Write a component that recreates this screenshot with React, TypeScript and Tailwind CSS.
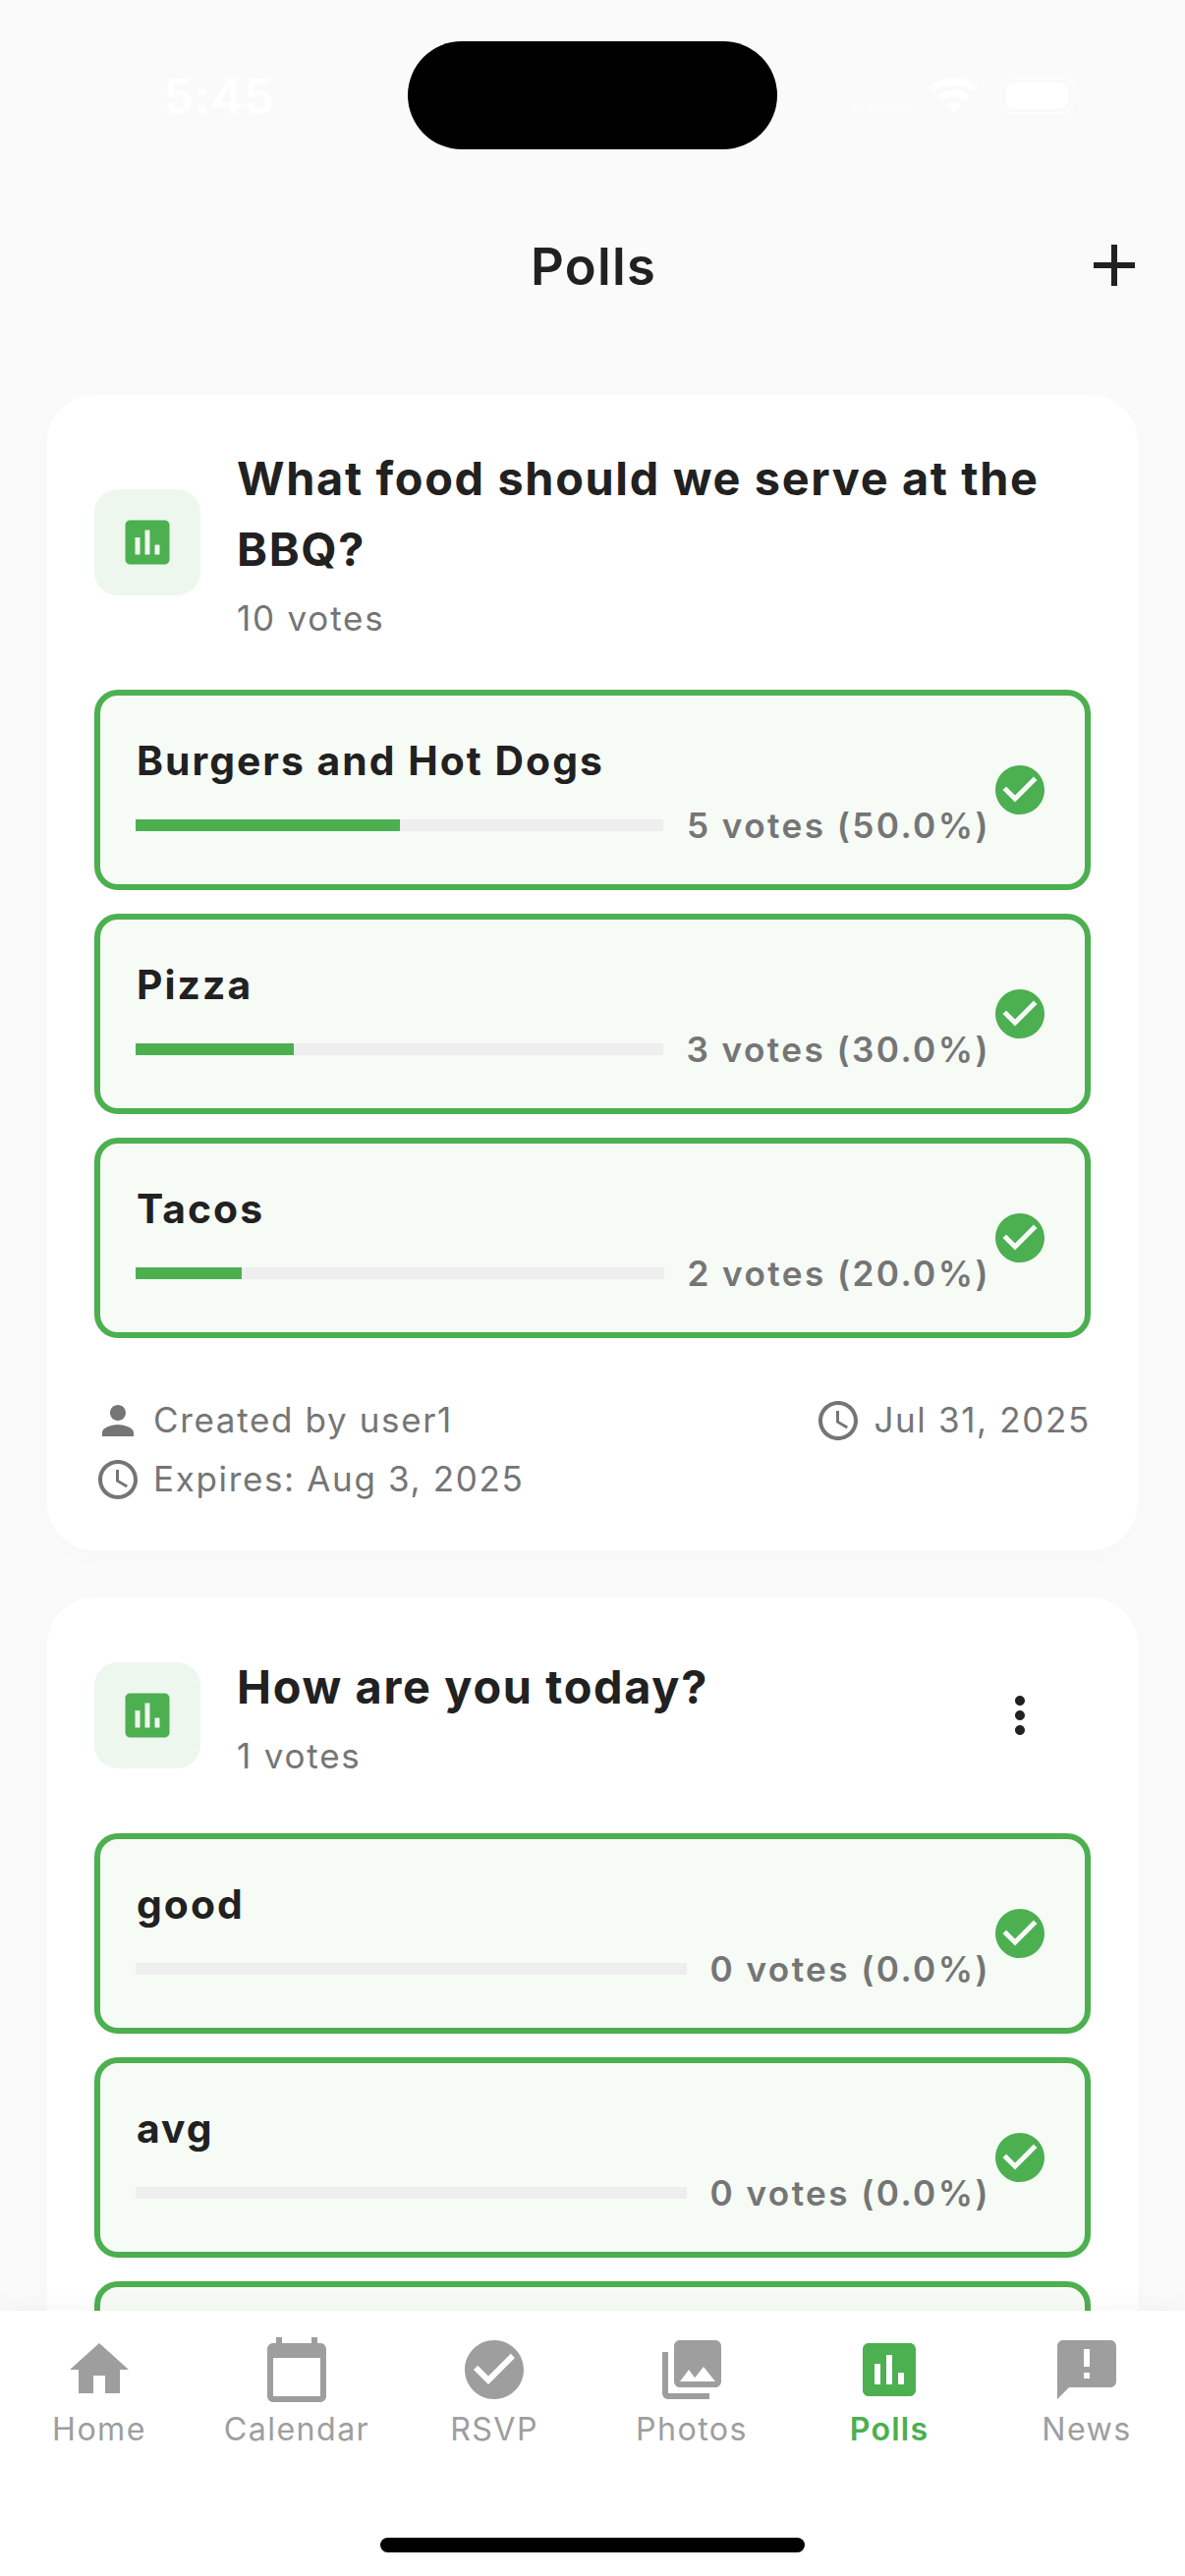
import type { ReactNode } from "react";
import type { IconType } from "react-icons";
import {
  MdAccessTime,
  MdAdd,
  MdAnnouncement,
  MdCalendarToday,
  MdCheckCircle,
  MdCollections,
  MdHome,
  MdMoreVert,
  MdPerson,
  MdPoll,
} from "react-icons/md";

type Option = { name: string; votes: number; percent: number };

type Poll = {
  title: string;
  votes: number;
  options: Option[];
  menu?: boolean;
  more?: boolean;
  footer?: { author: string; created: string; expires: string };
};

const polls: Poll[] = [
  {
    title: "What food should we serve at the BBQ?",
    votes: 10,
    options: [
      { name: "Burgers and Hot Dogs", votes: 5, percent: 50 },
      { name: "Pizza", votes: 3, percent: 30 },
      { name: "Tacos", votes: 2, percent: 20 },
    ],
    footer: { author: "user1", created: "Jul 31, 2025", expires: "Aug 3, 2025" },
  },
  {
    title: "How are you today?",
    votes: 1,
    menu: true,
    more: true,
    options: [
      { name: "good", votes: 0, percent: 0 },
      { name: "avg", votes: 0, percent: 0 },
    ],
  },
];

const tabs: { label: string; icon: IconType; active?: boolean }[] = [
  { label: "Home", icon: MdHome },
  { label: "Calendar", icon: MdCalendarToday },
  { label: "RSVP", icon: MdCheckCircle },
  { label: "Photos", icon: MdCollections },
  { label: "Polls", icon: MdPoll, active: true },
  { label: "News", icon: MdAnnouncement },
];

function StatusBar() {
  return (
    <div className="flex h-[186px] shrink-0 items-start">
      <div className="flex w-[415px] justify-center pt-[68px] pl-[31px] text-[49.5px] leading-[60px] font-semibold tracking-[0.7px] text-white">
        5:45
      </div>
      <div className="mt-[42px] h-[110px] w-[376px] rounded-full bg-black" />
      <div className="flex flex-1 items-center pt-[78px] pl-[74px] text-white">
        <div className="flex w-[58px] justify-between self-end pb-[2px]">
          {[0, 1, 2, 3].map((i) => (
            <span key={i} className="size-[10px] rounded-[3px] bg-[#fbfbfb]" />
          ))}
        </div>
        <svg viewBox="0 0 51 37" className="ml-[22px] h-[37px] w-[51px]" fill="currentColor">
          <path d="M25.5 0C35 0 44 3.700 50.500 10.200L46 14.800C40.600 9.600 33.300 8 25.500 8S10.400 9.600 5 14.800L.5 10.200C7 3.700 16 0 25.500 0Z" />
          <path d="M25.500 12.500c6.200 0 12 2.400 16.400 6.500L37.300 24.700c-3.200-3-7.300-4.600-11.800-4.600s-8.600 1.600-11.800 4.600L9.100 19c4.400-4.100 10.200-6.500 16.400-6.500Z" />
          <path d="M25.500 25c2.900 0 5.600 1.100 7.600 3L25.500 36.500 17.900 28c2-1.900 4.700-3 7.600-3Z" />
        </svg>
        <svg viewBox="0 0 80 39" className="ml-[22px] h-[39px] w-[80px]" fill="none">
          <rect x="1.500" y="1.500" width="72" height="36" rx="11" stroke="#fcfcfc" strokeWidth="3" />
          <rect x="6" y="6" width="63" height="27" rx="7.500" fill="#fff" />
          <path d="M76.500 14c2 .8 3.500 3 3.500 5.500S78.500 24.200 76.500 25Z" fill="#fcfcfc" />
        </svg>
      </div>
    </div>
  );
}

function AppBar() {
  return (
    <header className="grid h-[168px] shrink-0 grid-cols-[1fr_auto_1fr] items-center text-[#212121]">
      <span />
      <h1 className="pt-[2px] pl-[2px] text-[52.5px] leading-[66px] font-semibold tracking-[1.270px]">Polls</h1>
      <button className="mr-[36px] justify-self-end">
        <MdAdd className="size-[72px]" />
      </button>
    </header>
  );
}

function OptionFrame({ children }: { children?: ReactNode }) {
  return (
    <div className="flex h-[204px] items-center rounded-[24px] border-[6px] border-[#4caf50] bg-[#f6fbf6] px-[36px]">
      {children}
    </div>
  );
}

function OptionRow({ name, votes, percent }: Option) {
  return (
    <OptionFrame>
      <div className="flex flex-1 flex-col gap-3">
        <div className="pl-px text-[40.8px] leading-[60px] font-[650] tracking-[2.050px] text-[#212121]">{name}</div>
        <div className="flex h-12 items-center gap-6">
          <div className="h-3 flex-1 bg-[#eeeeee]">
            <div className="h-full bg-[#4caf50]" style={{ width: `${percent}%` }} />
          </div>
          <span className="pb-px text-[35.2px] leading-[46px] font-[630] tracking-[2.400px] whitespace-nowrap text-[#757575]">
            {`${votes} votes (${percent.toFixed(1)}%)`}
          </span>
        </div>
      </div>
      <MdCheckCircle className="size-[60px] shrink-0 text-[#4caf50]" />
    </OptionFrame>
  );
}

function Meta({ icon: Icon, children }: { icon: IconType; children: ReactNode }) {
  return (
    <div className="flex h-12 items-center gap-3">
      <Icon className="size-12" />
      <span className="pb-[2px] leading-[46px]">{children}</span>
    </div>
  );
}

function PollCard({ poll }: { poll: Poll }) {
  return (
    <section className="shrink-0 rounded-[48px] bg-white p-12 shadow-[0_6px_24px_rgba(0,0,0,0.015)]">
      <div className="mb-12 flex items-center">
        <div className="flex size-[108px] shrink-0 items-center justify-center rounded-[24px] bg-[#edf7ee]">
          <MdPoll className="size-[60px] text-[#4caf50]" />
        </div>
        <div className="ml-[37px] flex-1">
          <h2 className="pt-px text-[46.8px] leading-[72px] font-[650] tracking-[1.680px] text-[#212121]">
            {poll.title}
          </h2>
          <p className="pt-[9px] text-[35px] leading-[50px] tracking-[1.800px] text-[#757575]">{`${poll.votes} votes`}</p>
        </div>
        {poll.menu && (
          <button className="flex size-36 items-center justify-center text-[#212121]">
            <MdMoreVert className="size-[60px]" />
          </button>
        )}
      </div>
      <div className="flex flex-col gap-6">
        {poll.options.map((option) => (
          <OptionRow key={option.name} {...option} />
        ))}
        {poll.more && <OptionFrame />}
      </div>
      {poll.footer && (
        <div className="mt-[60px] flex flex-col gap-3 text-[35px] tracking-[1.650px] text-[#757575]">
          <div className="flex justify-between">
            <Meta icon={MdPerson}>{`Created by ${poll.footer.author}`}</Meta>
            <Meta icon={MdAccessTime}>{poll.footer.created}</Meta>
          </div>
          <Meta icon={MdAccessTime}>{`Expires: ${poll.footer.expires}`}</Meta>
        </div>
      )}
    </section>
  );
}

function TabBar() {
  return (
    <nav className="relative flex h-[270px] shrink-0 flex-col items-center bg-white shadow-[0_-6px_24px_rgba(0,0,0,0.03)]">
      <div className="grid w-full grid-cols-6 pt-6">
        {tabs.map(({ label, icon: Icon, active }) => (
          <div
            key={label}
            className={
              active
                ? "flex flex-col items-center font-semibold tracking-[1.200px] text-[#4caf50]"
                : "flex flex-col items-center font-[430] tracking-[1.400px] text-[#9e9e9e]"
            }
          >
            <Icon className="size-[72px]" />
            <span className="pt-px pl-px text-[32.2px] leading-[48px]">{label}</span>
          </div>
        ))}
      </div>
      <div className="mt-auto mb-6 h-[15px] w-[432px] rounded-full bg-black" />
    </nav>
  );
}

export default function App() {
  return (
    <div className="flex h-[2622px] w-[1206px] flex-col overflow-hidden bg-[#fafafa] font-['Inter',sans-serif]">
      <StatusBar />
      <AppBar />
      <main className="flex min-h-0 flex-1 flex-col gap-12 overflow-hidden p-12">
        {polls.map((poll) => (
          <PollCard key={poll.title} poll={poll} />
        ))}
      </main>
      <TabBar />
    </div>
  );
}
